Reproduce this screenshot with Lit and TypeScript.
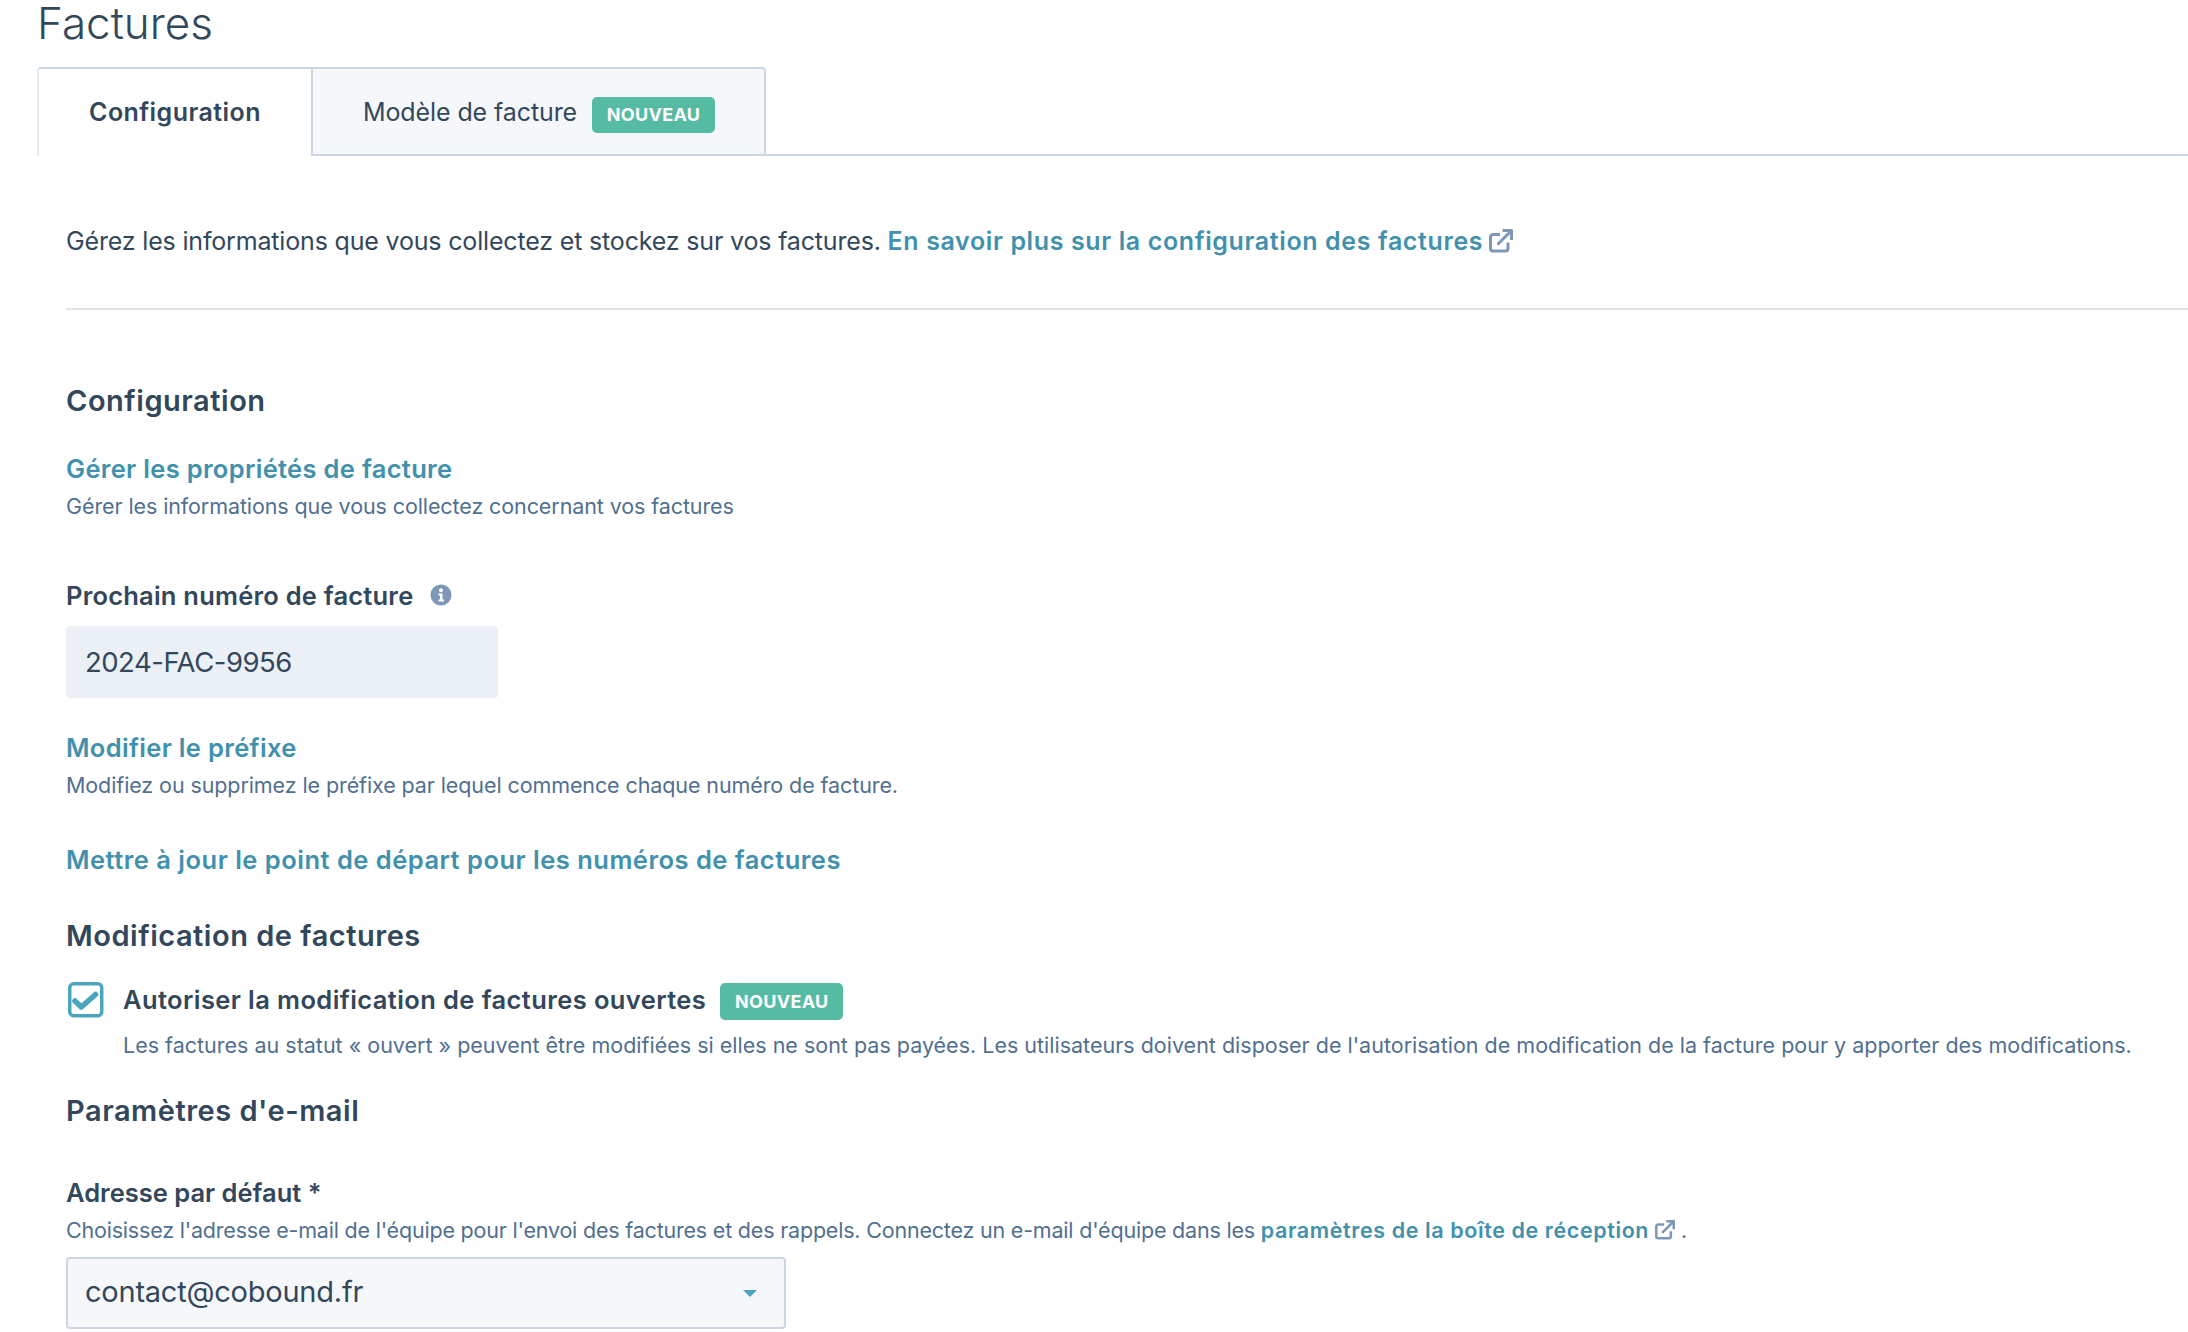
import { LitElement, html, css } from "lit";
import { customElement } from "lit/decorators.js";

const ext = (size: number) => html`<svg class="ext" width=${size} height=${size} viewBox="0 0 24 24" fill="none" stroke="#7c98b6" stroke-width="3" stroke-linejoin="round">
  <path d="M11 5.500H4A2.500 2.500 0 0 0 1.500 8v11.500A2.500 2.500 0 0 0 4 22h12.500a2.500 2.500 0 0 0 2.500-2.500V13.500"/>
  <path d="M8.500 15.500 21 3M13.500 1.500h9v9.500"/>
</svg>`;

const badge = (cls = "") => html`<span class="badge ${cls}">NOUVEAU</span>`;

@customElement("app-root")
export class AppRoot extends LitElement {
  static styles = css`
    :host { display: block; width: 2188px; height: 1332px; overflow: hidden; background: #fff; color: #33475b; font-family: Inter, Lato, sans-serif; }
    * { box-sizing: border-box; }
    h1 { margin: 0 0 21px 37px; font-size: 44px; line-height: 46px; font-weight: 300; }
    .tabs { display: flex; height: 89px; padding-left: 37px; }
    .tab { display: flex; align-items: center; height: 89px; font-size: 25px; border: 2px solid #cbd6e2; border-bottom: none; }
    .tab.active { width: 274px; justify-content: center; padding-bottom: 2px; background: #fff; font-weight: 600; letter-spacing: 0.43px; border-right: none; border-radius: 4px 0 0 0; border-left-color: #e5ebf1; }
    .tab.other { width: 455px; padding-left: 50px; gap: 15px; background: #f5f7fa; letter-spacing: -0.1px; border-bottom: 2px solid #cbd6e2; border-radius: 0 4px 0 0; }
    .tabs-rest { flex: 1; border-bottom: 2px solid #cbd6e2; }
    .badge { display: inline-flex; align-items: center; justify-content: center; width: 123px; height: 37px; margin-top: 2px; background: #56bba3; color: #fff; border-radius: 5px; font-size: 18px; font-weight: 700; letter-spacing: 0.3px; }
    .badge.in-tab { margin-top: 6px; height: 36px; }
    main { padding-left: 66px; }
    .intro { margin-top: 68px; height: 34px; line-height: 34px; font-size: 25px; letter-spacing: -0.17px; white-space: nowrap; display: flex; align-items: center; }
    .intro span { white-space: pre; }
    .link { color: #4191ac; font-weight: 600; }
    .intro .link { letter-spacing: 0.62px; }
    .rule { height: 2px; margin-top: 50px; background: #dfe3eb; }
    h2 { margin: 0; height: 36px; line-height: 36px; font-size: 29px; font-weight: 600; letter-spacing: 0.52px; }
    .block-link { height: 34px; line-height: 34px; font-size: 25.500px; letter-spacing: 0.49px; }
    .block-link.short { letter-spacing: 0.32px; }
    .sub { height: 30px; line-height: 30px; font-size: 21.500px; letter-spacing: -0.1px; color: #516f90; white-space: nowrap; display: flex; align-items: center; }
    .sub span { white-space: pre; }
    .sub .link { letter-spacing: 0.6px; }
    .sub.tight { letter-spacing: -0.2px; }
    .label { height: 32px; line-height: 32px; font-size: 25.500px; font-weight: 600; letter-spacing: 0.22px; display: flex; align-items: center; }
    .label.plain { letter-spacing: 0; }
    .info { margin-left: 17px; margin-top: -2px; }
    .input { width: 432px; height: 72px; margin-top: 14px; padding-left: 19px; display: flex; align-items: center; background: #eaf0f6; border-radius: 4px; font-size: 27.500px; letter-spacing: -0.5px; }
    .check-row { display: flex; align-items: center; height: 36px; }
    .check { width: 38px; height: 38px; margin-left: 1px; margin-right: 18px; flex: none; }
    .check-row .label { margin-right: 14px; letter-spacing: 0.4px; }
    .desc { margin-left: 57px; letter-spacing: 0; }
    .select { width: 720px; height: 72px; margin-top: 12px; padding: 0 27px 3px 17px; display: flex; align-items: center; justify-content: space-between; background: #f5f7fa; border: 2px solid #cbd6e2; border-radius: 4px; font-size: 29px; letter-spacing: -0.23px; }
    .caret { width: 0; height: 0; margin-top: 3px; border-left: 7px solid transparent; border-right: 7px solid transparent; border-top: 7px solid #4ba5bf; }
    .ext { flex: none; display: block; }
    .mt-config { margin-top: 73px; }
    .mt-33 { margin-top: 33px; }
    .mt-sub { margin-top: 5px; }
    .mt-59 { margin-top: 59px; }
    .mt-43 { margin-top: 43px; }
    .mt-41 { margin-top: 41px; }
    .mt-28 { margin-top: 28px; }
    .mt-12 { margin-top: 12px; }
    .mt-48 { margin-top: 48px; }
    .mt-sub-b { margin-top: 6px; }
    .ml-6 { margin-left: 6px; }
  `;

  render() {
    return html`
      <h1>Factures</h1>
      <div class="tabs">
        <div class="tab active">Configuration</div>
        <div class="tab other">Modèle de facture ${badge("in-tab")}</div>
        <div class="tabs-rest"></div>
      </div>
      <main>
        <div class="intro"><span>Gérez les informations que vous collectez et stockez sur vos factures. </span><span class="link">En savoir plus sur la configuration des factures</span><span class="ml-6">${ext(24)}</span></div>
        <div class="rule"></div>
        <h2 class="mt-config">Configuration</h2>
        <div class="block-link short link mt-33">Gérer les propriétés de facture</div>
        <div class="sub mt-sub">Gérer les informations que vous collectez concernant vos factures</div>
        <div class="label mt-59">Prochain numéro de facture
          <svg class="info" width="22" height="22" viewBox="0 0 22 22"><circle cx="11" cy="11" r="10.500" fill="#7c98b6"/><circle cx="11" cy="6.300" r="2" fill="#fff"/><path d="M8.500 9.500h4v6h1.500v2H8.500v-2H10v-4H8.500z" fill="#fff"/></svg>
        </div>
        <div class="input">2024-FAC-9956</div>
        <div class="block-link short link mt-33">Modifier le préfixe</div>
        <div class="sub mt-sub">Modifiez ou supprimez le préfixe par lequel commence chaque numéro de facture.</div>
        <div class="block-link link mt-43">Mettre à jour le point de départ pour les numéros de factures</div>
        <h2 class="mt-41">Modification de factures</h2>
        <div class="check-row mt-28">
          <svg class="check" viewBox="0 0 38 38" fill="none"><rect x="2.750" y="2.750" width="32" height="32" rx="4" stroke="#4ba5bf" stroke-width="3.500"/><path d="M8 20l6.300 6L28.500 13.500" stroke="#4ba5bf" stroke-width="5.500" stroke-linecap="round" stroke-linejoin="round"/></svg>
          <div class="label">Autoriser la modification de factures ouvertes</div>
          ${badge()}
        </div>
        <div class="sub desc mt-12">Les factures au statut « ouvert » peuvent être modifiées si elles ne sont pas payées. Les utilisateurs doivent disposer de l'autorisation de modification de la facture pour y apporter des modifications.</div>
        <h2 class="mt-33">Paramètres d'e-mail</h2>
        <div class="label plain mt-48">Adresse par défaut *</div>
        <div class="sub tight mt-sub-b"><span>Choisissez l'adresse e-mail de l'équipe pour l'envoi des factures et des rappels. Connectez un e-mail d'équipe dans les </span><span class="link">paramètres de la boîte de réception</span><span class="ml-6">${ext(20)}</span><span> .</span></div>
        <div class="select"><span>contact@cobound.fr</span><span class="caret"></span></div>
      </main>
    `;
  }
}
